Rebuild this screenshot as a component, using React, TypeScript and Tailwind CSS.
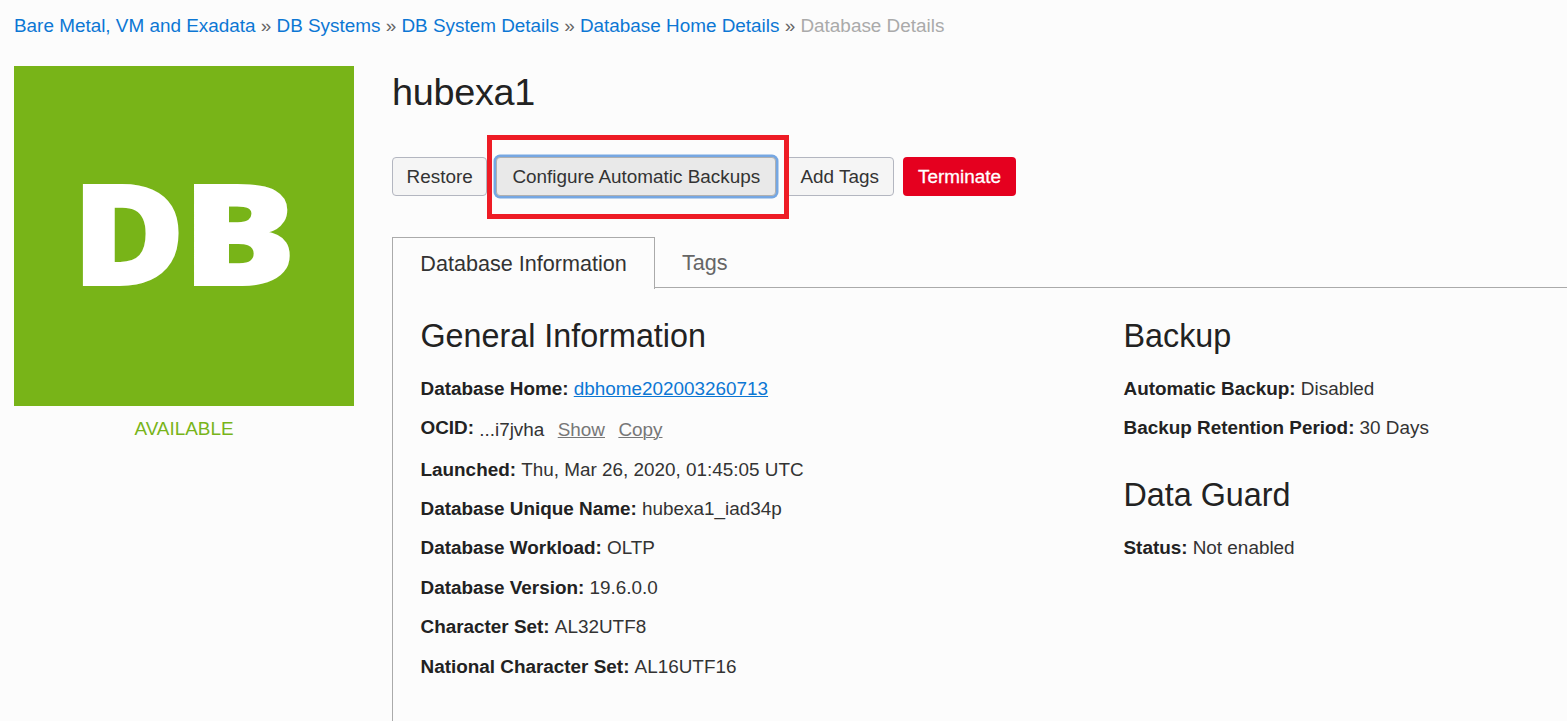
import type { ReactNode } from "react";

const crumbs = ["Bare Metal, VM and Exadata", "DB Systems", "DB System Details", "Database Home Details"];

function Field({ label, children }: { label: string; children: ReactNode }) {
  return (
    <div className="mb-[12.36px] flex gap-[5.2px] leading-[27px]">
      <dt className="font-bold text-[#222]">{label}:</dt>
      <dd>{children}</dd>
    </div>
  );
}

function Heading({ children }: { children: ReactNode }) {
  return <h2 className="mb-[18px] text-[32.3px] leading-[41px] text-[#222]">{children}</h2>;
}

export default function App() {
  return (
    <div className="h-[721px] w-full overflow-hidden bg-[#fcfcfc] pl-[14px] font-['Liberation_Sans',Arial,sans-serif] text-[18.9px] whitespace-nowrap text-[#333]">
      <nav className="flex h-[66px] gap-[5.25px] pt-[12px] leading-[27px]">
        {crumbs.map((c) => (
          <span key={c} className="flex gap-[5.25px]">
            <a className="text-[#0c77d4]">{c}</a>
            <span className="text-[#666]">»</span>
          </span>
        ))}
        <span className="text-[#aaa]">Database Details</span>
      </nav>
      <div className="flex">
        <aside className="w-[340px] shrink-0">
          <div className="flex h-[340px] items-start bg-[#78b418] pt-[94.5px] pl-[57.5px] font-['Open_Sans',sans-serif] text-[140.5px] leading-none font-extrabold text-white [-webkit-text-stroke:1.8px_white]">
            <span className="w-[110px] origin-left scale-x-[1.1]">D</span>
            <span className="origin-left scale-x-[1.21]">B</span>
          </div>
          <p className="mt-[9px] text-center leading-[27px] text-[#78b41a]">AVAILABLE</p>
        </aside>
        <main className="ml-[38px] min-w-0 flex-1">
          <h1 className="h-[91px] pt-[2px] text-[37.8px] leading-[48px] tracking-[-0.3px] text-[#222]">hubexa1</h1>
          <div className="flex h-[80px] items-start gap-[9px]">
            <button className="h-[39px] w-[95.3px] rounded-[4px] border border-[#b3b6c0] bg-[#f5f5f5] pt-[2px]">Restore</button>
            <div className="relative">
              <button className="h-[39px] w-[280px] rounded-[4px] border border-[#b0b0b0] bg-[#e9e9e9] pt-[2px] ring-[2.5px] ring-[#76a7e2]">
                Configure Automatic Backups
              </button>
              <div className="absolute -top-[22px] -left-[9.3px] z-10 h-[84px] w-[302px] border-5 border-[#ee1c25]" />
            </div>
            <button className="h-[39px] w-[108.7px] rounded-[4px] border border-[#b3b6c0] bg-[#f5f5f5] pt-[2px]">Add Tags</button>
            <button className="h-[39px] w-[113px] rounded-[4px] bg-[#e5001f] pt-[2px] text-white [-webkit-text-stroke:0.3px_white]">Terminate</button>
          </div>
          <div className="flex h-[51px] text-[21.6px]">
            <div className="h-[52px] w-[263px] border-t border-r border-l border-[#aaa] pl-[27.3px] leading-[51px] text-[#333]">
              Database Information
            </div>
            <div className="flex-1 border-b border-[#aaa] pl-[27px] leading-[51px] text-[#666]">Tags</div>
          </div>
          <div className="flex h-[433px] border-l border-[#aaa] pt-[28px] pl-[27.5px]">
            <dl className="w-[703px]">
              <Heading>General Information</Heading>
              <Field label="Database Home">
                <a className="text-[#0c77d4] underline decoration-1">dbhome202003260713</a>
              </Field>
              <Field label="OCID">
                <div className="flex gap-[13.4px] pt-[2px]">
                  <span>...i7jvha</span>
                  <a className="text-[#777] underline decoration-1">Show</a>
                  <a className="text-[#777] underline decoration-1">Copy</a>
                </div>
              </Field>
              <Field label="Launched">Thu, Mar 26, 2020, 01:45:05 UTC</Field>
              <Field label="Database Unique Name">hubexa1_iad34p</Field>
              <Field label="Database Workload">OLTP</Field>
              <Field label="Database Version">19.6.0.0</Field>
              <Field label="Character Set">AL32UTF8</Field>
              <Field label="National Character Set">AL16UTF16</Field>
            </dl>
            <dl>
              <Heading>Backup</Heading>
              <Field label="Automatic Backup">Disabled</Field>
              <Field label="Backup Retention Period">30 Days</Field>
              <div className="h-[21px]" />
              <Heading>Data Guard</Heading>
              <Field label="Status">Not enabled</Field>
            </dl>
          </div>
        </main>
      </div>
    </div>
  );
}
